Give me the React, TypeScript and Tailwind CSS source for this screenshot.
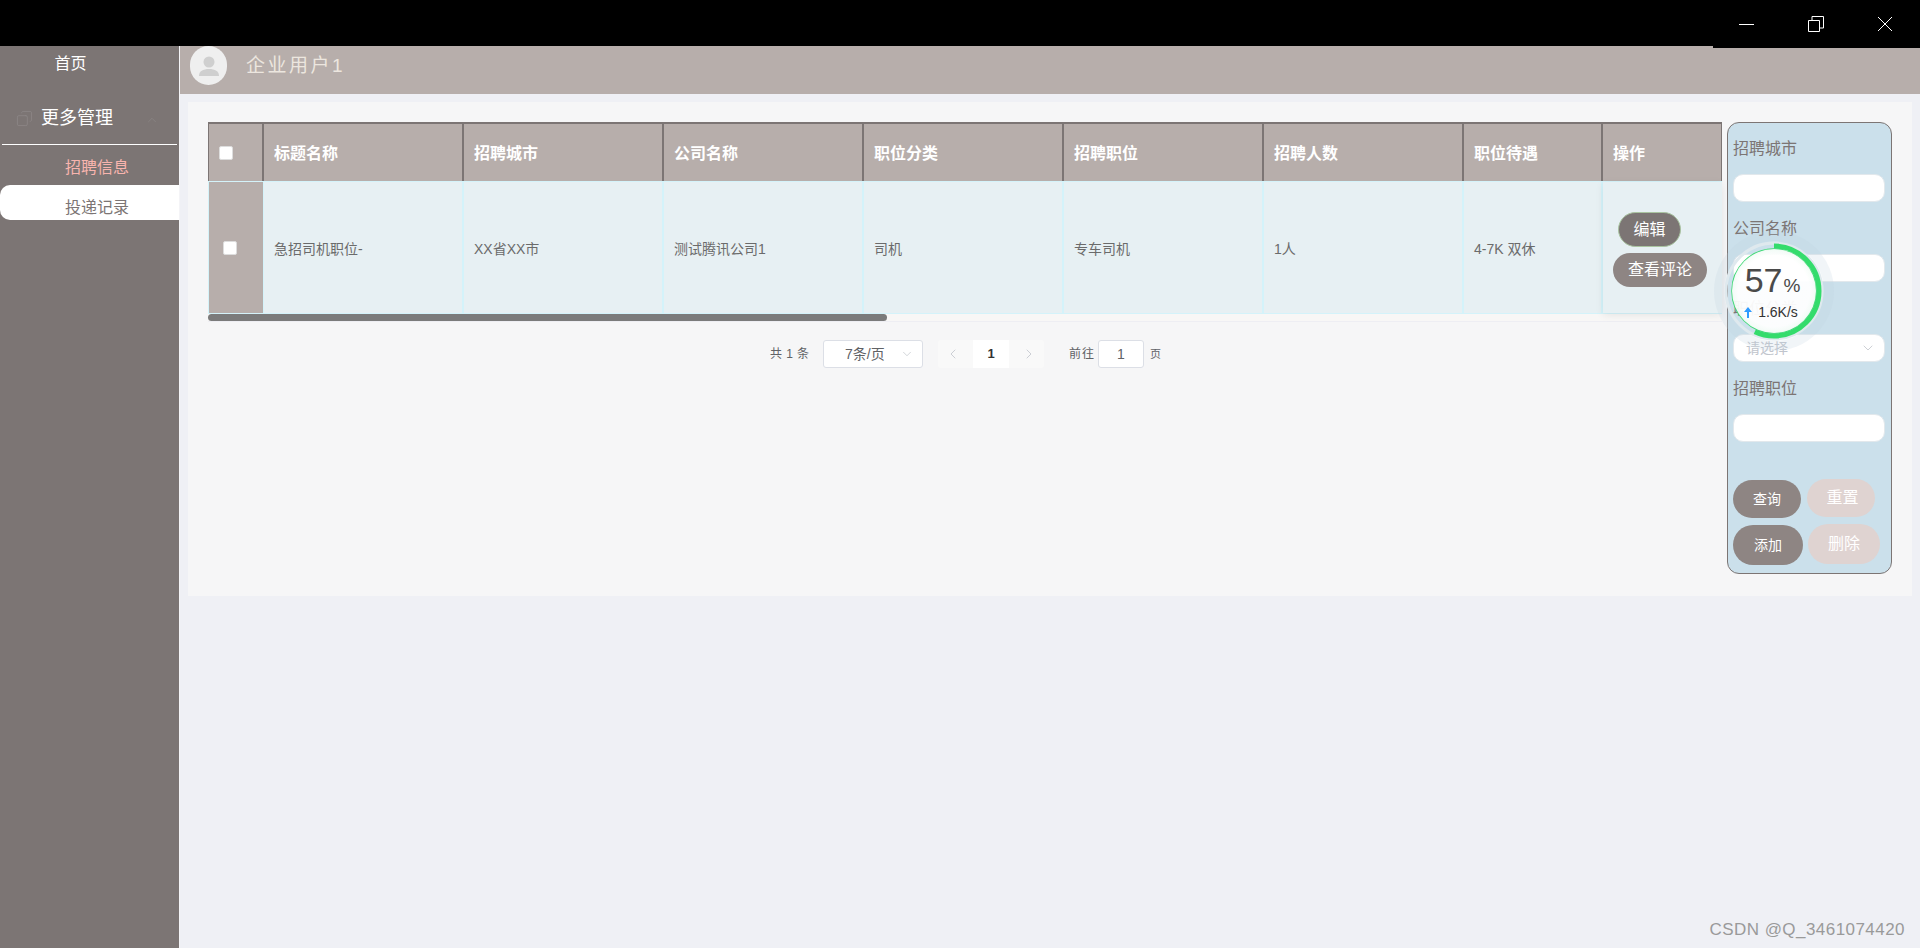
import { ChevronDown, ChevronLeft, ChevronRight, ChevronUp, Copy } from 'lucide-react';

const FONT = "font-['Liberation_Sans','Noto_Sans_CJK_SC',sans-serif]";

const columns = [
  { title: '标题名称', value: '急招司机职位-', width: 'w-[200px]' },
  { title: '招聘城市', value: 'XX省XX市', width: 'w-[200px]' },
  { title: '公司名称', value: '测试腾讯公司1', width: 'w-[200px]' },
  { title: '职位分类', value: '司机', width: 'w-[200px]' },
  { title: '招聘职位', value: '专车司机', width: 'w-[200px]' },
  { title: '招聘人数', value: '1人', width: 'w-[200px]' },
  { title: '职位待遇', value: '4-7K 双休', width: 'w-[139px]' },
];

// Floating network speed widget
const SpeedBall = () => (
  <div className="absolute left-[1724px] top-[241px] z-20 h-[100px] w-[100px] rounded-full shadow-[0_0_0_10px_rgba(190,210,225,0.22)]">
    <svg className="absolute inset-0" width="100" height="100" viewBox="0 0 100 100">
      <circle cx="50" cy="50" r="48" fill="none" stroke="#dfe9ee" strokeWidth="3" />
      <circle
        cx="50"
        cy="50"
        r="45"
        fill="none"
        stroke="#34dc6c"
        strokeWidth="5"
        strokeDasharray="161 283"
        transform="rotate(-90 50 50)"
      />
      <circle cx="50" cy="50" r="42" fill="none" stroke="#3bd873" strokeWidth="1.5" />
    </svg>
    <div className="absolute left-[8px] top-[8px] flex h-[84px] w-[84px] flex-col items-center rounded-full bg-[radial-gradient(circle_at_50%_50%,rgba(255,255,255,0.94)_60%,rgba(214,245,224,0.96)_100%)]">
      <div className="mt-[10px] flex h-[42px] items-baseline pr-[3px] text-[#4a4a4a]">
        <span className="text-[34px] font-light leading-[42px]">57</span>
        <span className="ml-[1px] text-[19px] leading-[20px]">%</span>
      </div>
      <div className="mt-[2px] flex items-center gap-[6px] pr-[6px] text-[14px] leading-[18px] text-[#333]">
        <svg width="8" height="11" viewBox="0 0 8 11">
          <path d="M4 0 L8 5 H5 V11 H3 V5 H0 Z" fill="#2f9bff" />
        </svg>
        1.6K/s
      </div>
    </div>
  </div>
);

const Field = ({ label, select }: { label: string; select?: boolean }) => (
  <div className="h-[80px]">
    <div className="h-[45px] pl-[3px] text-[16px] leading-[40px] text-[#7c7574]">{label}</div>
    <div className="ml-[3px] flex h-[28px] w-[152px] items-center justify-between rounded-[10px] border border-[#e2e8ec] bg-white pl-3 pr-[8px]">
      {select && (
        <>
          <span className="text-[14px] text-[#c0c4cc]">请选择</span>
          <ChevronDown size={16} strokeWidth={1} className="text-[#b4b8c0]" />
        </>
      )}
    </div>
  </div>
);

export default function App() {
  return (
    <div className={`${FONT} relative h-[948px] w-[1920px] overflow-hidden bg-[#eff0f5]`}>
      {/* Window title bar */}
      <div className="relative z-10 flex h-[46px] justify-end bg-black">
        <div className="flex h-[48px] w-[207px] items-center bg-black pl-[26px] text-white">
          <svg width="16" height="16" viewBox="0 0 16 16" className="mr-[53px]">
            <path d="M0 8.5H15" stroke="white" strokeWidth="1" />
          </svg>
          <svg width="16" height="16" viewBox="0 0 16 16" className="mr-[53px]">
            <path d="M0.5 4.5H11.5V15.5H0.5Z M4 4V0.5H15.5V12H12" stroke="white" strokeWidth="1" fill="none" />
          </svg>
          <svg width="16" height="16" viewBox="0 0 16 16">
            <path d="M1 1L15 15M15 1L1 15" stroke="white" strokeWidth="1" fill="none" />
          </svg>
        </div>
      </div>

      <div className="flex h-[902px]">
        {/* Sidebar */}
        <aside className="h-full w-[180px] shrink-0 border-r border-[#f4f4f7] bg-[#7c7574]">
          <div className="h-[34px] pr-[38px] pt-px text-center text-[16px] leading-[34px] text-white">首页</div>
          <div className="flex h-[64px] items-center pl-4 pt-[12px]">
            <Copy size={17} strokeWidth={1} className="-scale-x-100 text-[#8f8a8a]" />
            <span className="ml-2 text-[18px] text-white">更多管理</span>
            <ChevronUp size={14} strokeWidth={1} className="ml-[32px] mt-[4px] text-[#8f8a8a]" />
          </div>
          <div className="mx-[2px] h-px bg-white" />
          <div className="h-[40px] pl-[65px] text-[16px] leading-[46px] text-[#f8b4ae]">招聘信息</div>
          <div className="h-[35px] rounded-l-[10px] bg-white pl-[65px] text-[16px] leading-[46px] text-[#7c7574]">
            投递记录
          </div>
        </aside>

        <div className="flex-1">
          {/* Header */}
          <header className="flex h-[48px] overflow-hidden bg-[#b7aeab]">
            <div className="ml-[10px] flex h-[39px] w-[37px] items-center justify-center overflow-hidden rounded-full bg-[#efefef]">
              <svg width="24" height="24" viewBox="0 0 24 24" fill="#cfcfcf">
                <circle cx="12" cy="8" r="5.5" />
                <path d="M2 22c0-5 4-7 10-7s10 2 10 7z" />
              </svg>
            </div>
            <span className="ml-[19px] text-[19px] leading-[40px] tracking-[2.5px] text-[#ece6df]">企业用户1</span>
          </header>

          {/* Main panel */}
          <main className="mx-2 mt-2 flex h-[494px] bg-[#f6f6f7] pl-5 pt-5">
            <div className="w-[1514px]">
              {/* Table */}
              <div className="flex h-[59px] border-t-2 border-l border-[#7c7574] bg-[#b7aeab] text-[16px] font-bold text-white">
                <div className="flex w-[55px] items-center border-r-2 border-[#7c7574] pl-[10px]">
                  <span className="h-[14px] w-[14px] rounded-[2px] border border-[#ddd] bg-white" />
                </div>
                {columns.map((c) => (
                  <div key={c.title} className={`${c.width} flex items-center border-r-2 border-[#7c7574] pl-[10px] pt-[3px]`}>
                    {c.title}
                  </div>
                ))}
                <div className="flex flex-1 items-center border-r border-[#7c7574] pl-[10px] pt-[3px]">操作</div>
              </div>
              <div className="flex h-[133px] border-y border-[#d4f3fa] bg-[#e7f0f3] text-[14px] text-[#6b6b6b]">
                <div className="flex w-[56px] items-center border-x border-[#d4f3fa] bg-[#b7aeab] pl-[14px] pt-px">
                  <span className="h-[14px] w-[14px] rounded-[2px] border border-[#ddd] bg-white" />
                </div>
                {columns.map((c) => (
                  <div key={c.title} className={`${c.width} flex items-center border-r-2 border-[#d4f3fa] pl-[10px] pt-[3px]`}>
                    {c.value}
                  </div>
                ))}
                <div className="flex flex-1 flex-col items-start pl-[10px] pt-[30px] shadow-[0_2px_8px_rgba(0,0,0,0.08)]">
                  <button className="ml-[5px] h-[35px] w-[63px] rounded-full border border-[#a9c4a0] bg-[#7c7574] text-[16px] text-white">
                    编辑
                  </button>
                  <button className="mt-[6px] h-[34px] w-[94px] rounded-full bg-[#8e8583] text-[16px] text-white">
                    查看评论
                  </button>
                </div>
              </div>
              {/* Scrollbar */}
              <div className="h-[8px] border-b border-[#eeeef3] bg-[#f8f7f6]">
                <div className="h-[7px] w-[679px] rounded-[4px] bg-[#7b7b7b]" />
              </div>

              {/* Pagination */}
              <div className="ml-[562px] mt-[18px] flex h-[28px] items-center text-[#606266]">
                <span className="w-[53px] text-[12px] tracking-[0.4px]">共 1 条</span>
                <div className="flex h-[28px] w-[100px] items-center rounded-[3px] border border-[#dcdfe6] bg-white pl-[21px] pr-[8px]">
                  <span className="flex-1 text-[14px]">7条/页</span>
                  <ChevronDown size={14} strokeWidth={1} className="text-[#b4b8c0]" />
                </div>
                <div className="ml-[15px] flex h-[28px] w-[35px] items-center justify-center rounded-l-[3px] bg-[#f9f9f9] pr-[6px]">
                  <ChevronLeft size={16} strokeWidth={1.2} className="text-[#c0c4cc]" />
                </div>
                <div className="flex h-[28px] w-[36px] items-center justify-center bg-white text-[13px] font-bold text-[#333]">1</div>
                <div className="flex h-[28px] w-[35px] items-center justify-center rounded-r-[3px] bg-[#f9f9f9] pl-[4px]">
                  <ChevronRight size={16} strokeWidth={1.2} className="text-[#c0c4cc]" />
                </div>
                <span className="ml-[25px] text-[12px] tracking-[1px]">前往</span>
                <div className="ml-[3px] flex h-[28px] w-[46px] items-center justify-center rounded-[3px] border border-[#dcdfe6] bg-white text-[14px]">
                  1
                </div>
                <span className="ml-[6px] text-[11px]">页</span>
              </div>
            </div>

            {/* Search panel */}
            <div className="ml-[5px] h-[452px] w-[165px] rounded-[12px] border border-[#7c7574] bg-[#cbe0eb] pl-[2px] pt-[6px]">
              <Field label="招聘城市" />
              <Field label="公司名称" />
              <Field label="职位分类" select />
              <Field label="招聘职位" />
              <div className="mt-[30px] flex items-start pl-[3px]">
                <button className="mt-px h-[38px] w-[68px] rounded-full bg-[#8e8583] text-[14px] text-white">查询</button>
                <button className="ml-[6px] h-[38px] w-[68px] rounded-full bg-[#dfd3d1] pl-[3px] text-[16px] text-white">重置</button>
              </div>
              <div className="mt-[6px] flex items-start pl-[3px]">
                <button className="mt-px h-[40px] w-[70px] rounded-full bg-[#8e8583] text-[14px] text-white">添加</button>
                <button className="ml-[5px] h-[40px] w-[72px] rounded-full bg-[#dfd3d1] text-[16px] text-white">删除</button>
              </div>
            </div>
          </main>
        </div>
      </div>

      <SpeedBall />
      <div className="absolute bottom-[6px] right-[15px] text-[17px] tracking-[0.45px] text-[#9a9a9a]">CSDN @Q_3461074420</div>
    </div>
  );
}
